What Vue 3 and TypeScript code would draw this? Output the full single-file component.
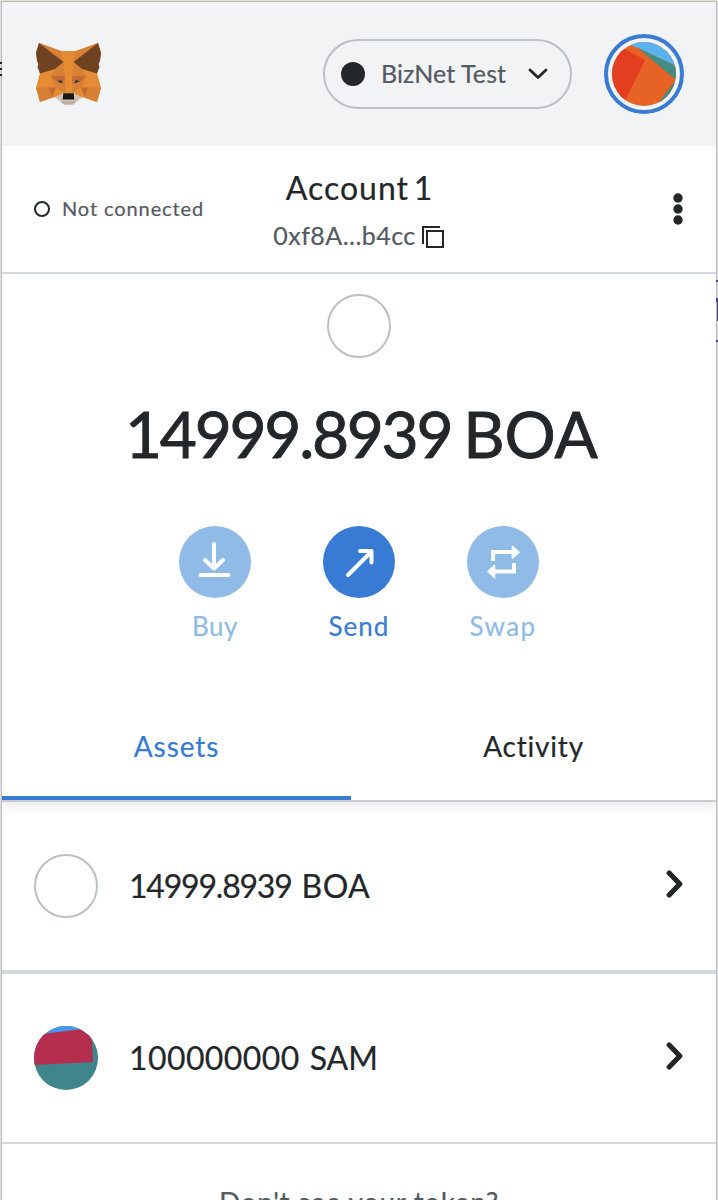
<script setup lang="ts">
interface Asset {
  amount: string
  symbol: string
  icon: 'empty' | 'jazz'
}

const assets: Asset[] = [
  { amount: '14999.8939', symbol: 'BOA', icon: 'empty' },
  { amount: '100000000', symbol: 'SAM', icon: 'jazz' },
]

const foxHalves = ['translate(0 0)', 'translate(67 0) scale(-1 1)']
</script>

<template>
  <div class="frame">
    <i class="sliver s1"></i><i class="sliver s2"></i><i class="sliver s3"></i>
    <i class="mark m1"></i><i class="mark m2"></i><i class="mark m3"></i><i class="mark m4"></i>
    <div class="popup">
      <header class="top">
        <svg class="fox" width="68" height="64" viewBox="0 0 68 64">
          <g v-for="half in foxHalves" :key="half" :transform="half">
            <path fill="#e58b34" d="M4 1 26 9H34V58H28L20 55 5 60 1 46 5 31 1 11Z" />
            <path fill="#d87f36" d="M4 1 26 9 28.5 20ZM20 27 28.5 21 30 33V51L20 45 16 34ZM1 45.5H14L17 55.5 5 60Z" />
            <path fill="#c26b34" d="M16 34.5 29.5 34V41L20 38.5ZM14 45.5H21L17 55.5Z" />
            <path fill="#6f4221" d="M4 1 28.5 20 20 27 5 31.5 2.5 25 3.5 22 2 19 1 11Z" />
            <path fill="#d2c1b5" d="M20 55.2 28 51H34V62.5H29Z" />
            <path fill="#bfae9f" d="M25 59H34V62.5H29Z" />
            <path fill="#161616" d="M28.3 51.2H34V57.5H27.7Z" />
            <path fill="#263447" d="M22 39.5 26 38 28 41.5Z" />
          </g>
        </svg>
        <div class="right">
          <button class="network">
            <span class="netdot"></span>
            <span class="t network-name">BizNet Test</span>
            <svg class="down" width="20" height="12" viewBox="0 0 20 12"><path d="M2 2 10 9.5 18 2" /></svg>
          </button>
          <div class="avatar">
            <svg width="64" height="64" viewBox="0 0 64 64">
              <clipPath id="avatar"><circle cx="32" cy="32" r="32" /></clipPath>
              <g clip-path="url(#avatar)">
                <path fill="#e66325" d="M0 0H64V64H0Z" />
                <path fill="#5bb3ee" d="M18 0H64V24L26 6 18 3Z" />
                <path fill="#438c80" d="M26 6 64 24V38Z" />
                <path fill="#438c80" d="M64 38V64H44Z" />
                <path fill="#e43e20" d="M0 0 33 18 13 59 0 64Z" />
              </g>
            </svg>
          </div>
        </div>
      </header>
      <section class="account">
        <div class="status"><span class="ring"></span><span class="t status-text">Not connected</span></div>
        <div class="identity">
          <div class="t name">Account 1</div>
          <div class="address"><span class="t hash">0xf8A...b4cc</span>
            <svg width="22" height="22" viewBox="0 0 22 22"><path d="M1 18V1H18M5 5H21V21H5Z" /></svg>
          </div>
        </div>
        <svg class="dots" width="10" height="32" viewBox="0 0 10 32"><circle cx="5" cy="5" r="4.7" /><circle cx="5" cy="16" r="4.7" /><circle cx="5" cy="27" r="4.7" /></svg>
      </section>
      <section class="overview">
        <div class="token"></div>
        <div class="balance"><span class="t big-num">14999.8939</span><span class="t big-sym">BOA</span></div>
        <div class="actions">
          <div class="action dim">
            <svg width="72" height="72" viewBox="0 0 72 72"><circle cx="36" cy="36" r="36" /><path d="M35 18V42M26 34 35 42.5 44 34M21.5 49H49.5" /></svg>
            <span class="t buy">Buy</span>
          </div>
          <div class="action">
            <svg width="72" height="72" viewBox="0 0 72 72"><circle cx="36" cy="36" r="36" /><path d="M25 49 48 26M37 25H48.5V36.5" /></svg>
            <span class="t send">Send</span>
          </div>
          <div class="action dim">
            <svg width="72" height="72" viewBox="0 0 72 72"><circle cx="36" cy="36" r="36" /><path class="square" d="M26 35V26H46M47 37V45.5H27" /><path class="solid" d="M45.5 20 52.5 26.2 45.5 32.5ZM27.5 39 20.5 45.5 27.5 52Z" /></svg>
            <span class="t swap">Swap</span>
          </div>
        </div>
      </section>
      <nav class="tabs">
        <div class="tab active"><span class="t assets">Assets</span></div>
        <div class="tab"><span class="t activity">Activity</span></div>
      </nav>
      <main>
        <div v-for="a in assets" :key="a.symbol" class="row" :class="a.icon">
          <div v-if="a.icon === 'empty'" class="token"></div>
          <svg v-else width="64" height="64" viewBox="0 0 64 64">
            <clipPath id="sam"><circle cx="32" cy="32" r="32" /></clipPath>
            <g clip-path="url(#sam)"><path fill="#3f858b" d="M0 0H64V64H0Z" /><path fill="#4895ed" d="M0 0H58V14L0 20Z" /><path fill="#b62e4d" d="M0 9 57 2 59 36 0 39Z" /></g>
          </svg>
          <div class="line"><span class="t amount">{{ a.amount }}</span><span class="t symbol">{{ a.symbol }}</span></div>
          <svg class="chev" width="18" height="28" viewBox="0 0 18 28"><path d="M3.2 3 13.8 14 3.2 25" /></svg>
        </div>
        <div class="foot"><span class="t hint">Don't see your token?</span></div>
      </main>
    </div>
  </div>
</template>

<style>
html, body { margin: 0; overflow: hidden; }
</style>

<style scoped>
* { box-sizing: border-box; }
.frame { position: relative; width: 718px; height: 1200px; overflow: hidden; padding: 0 1px; background: #e0e0e3; border-top: 1px solid #efdcd5; font-family: Lato, "Liberation Sans", sans-serif; color: #24272a; }
.sliver, .mark { position: absolute; }
.sliver { left: 0; width: 2px; height: 2px; background: #222; z-index: 2; }
.s1 { top: 61px; } .s2 { top: 67px; } .s3 { top: 73px; }
.mark { right: 0; width: 2px; height: 2px; background: #4e3a8b; z-index: 3; }
.m1 { top: 279px; } .m2 { top: 297px; height: 4px; } .m3 { top: 301px; height: 19px; width: 1px; } .m4 { top: 339px; }
.popup { height: 1199px; border: 1px solid #b9b9bc; border-bottom: 0; background: #fff; overflow: hidden; }
.t { display: inline-block; white-space: pre; -webkit-text-stroke: 0.2px currentColor; }
.top { height: 144px; background: #f2f3f5; padding: 0 32px; display: flex; align-items: center; justify-content: space-between; }
.fox { margin-left: 1px; }
.right { display: flex; align-items: center; gap: 32px; }
.network { width: 249px; height: 70px; border: 2px solid #bbc0c5; border-radius: 35px; background: none; display: flex; align-items: center; padding: 0 22px 0 16px; font: inherit; }
.netdot { width: 24px; height: 24px; border-radius: 50%; background: #24272a; margin-right: 16px; }
.network-name { font-size: 25px; letter-spacing: 0.1px; color: #535a61; padding-bottom: 2px; }
.down { margin-left: auto; fill: none; stroke: #24272a; stroke-width: 2.8; stroke-linecap: round; stroke-linejoin: round; }
.avatar { width: 80px; height: 80px; border: 4px solid #377bd5; border-radius: 50%; padding: 4px; }
.avatar svg { display: block; }
.account { height: 128px; border-bottom: 2px solid #d6d9dc; display: grid; grid-template-columns: 1fr 180px 1fr; align-items: center; padding: 0 33px 0 32px; }
.status { display: flex; align-items: center; gap: 12px; }
.ring { width: 16px; height: 16px; border: 2px solid #24272a; border-radius: 50%; }
.status-text { font-size: 20px; letter-spacing: 0.9px; color: #535a61; padding-bottom: 2px; }
.identity { text-align: center; align-self: start; padding-top: 22px; }
.name { font-size: 32px; line-height: 40px; letter-spacing: 1px; word-spacing: -4.5px; padding-left: 2px; }
.address { display: flex; align-items: center; justify-content: center; gap: 6px; height: 40px; margin-top: 8px; }
.hash { font-size: 25px; line-height: 32px; letter-spacing: 0.45px; color: #535a61; padding-bottom: 2px; }
.address svg { fill: none; stroke: #24272a; stroke-width: 2; margin-top: 1px; }
.dots { justify-self: end; fill: #24272a; }
.overview { height: 422px; padding-top: 20px; display: flex; flex-direction: column; align-items: center; position: relative; z-index: 2; background: #fff; }
.token { width: 64px; height: 64px; border: 2px solid #bbc0c5; border-radius: 50%; flex: none; }
.balance { display: flex; font-size: 64px; line-height: 90px; margin-top: 31px; padding-left: 5px; }
.balance .t { -webkit-text-stroke-width: 0.9px; }
.big-num { letter-spacing: -2.3px; margin-right: 12px; }
.big-sym { letter-spacing: 0; }
.actions { display: flex; gap: 72px; margin-top: 47px; }
.action { width: 72px; display: flex; flex-direction: column; align-items: center; color: #377bd5; font-size: 26px; line-height: 32px; gap: 12px; }
.action circle { fill: #377bd5; }
.action path { fill: none; stroke: #fff; stroke-width: 4; stroke-linecap: round; stroke-linejoin: round; }
.action .square { stroke-linecap: butt; stroke-linejoin: miter; }
.action .solid { fill: #fff; stroke-width: 1; }
.action.dim { color: #90bbe7; }
.dim circle { fill: #90bbe7; }
.buy { letter-spacing: 0.6px; }
.send { letter-spacing: 1px; }
.swap { letter-spacing: 1.4px; }
.tabs { height: 106px; display: flex; border-bottom: 2px solid #cacccf; box-shadow: 0 4px 12px #0000001a; position: relative; }
.tab { flex: 1; display: flex; align-items: center; justify-content: center; border-bottom: 4px solid transparent; font-size: 28px; }
.tab:first-child { flex: 0 0 349px; }
.active { color: #377bd5; border-color: #377bd5; }
.assets { letter-spacing: 0.9px; }
.activity { letter-spacing: 0.8px; }
.row { height: 172px; display: flex; align-items: center; padding: 0 32px; border-bottom: 4px solid #d6d9dc; }
.row.jazz { height: 170px; border-bottom-width: 2px; }
.line { margin: 0 0 2px 31px; font-size: 32px; display: flex; gap: 10px; }
.amount { letter-spacing: -1.2px; }
.jazz .amount { letter-spacing: 0.4px; }
.symbol { letter-spacing: 0.4px; }
.jazz .symbol { letter-spacing: 0; }
.chev { margin: 0 0 4px auto; fill: none; stroke: #24272a; stroke-width: 5.2; stroke-linecap: round; stroke-linejoin: round; }
.foot { text-align: center; padding-top: 38px; font-size: 28px; line-height: 40px; color: #535a61; }
.hint { letter-spacing: 0.6px; }
</style>
